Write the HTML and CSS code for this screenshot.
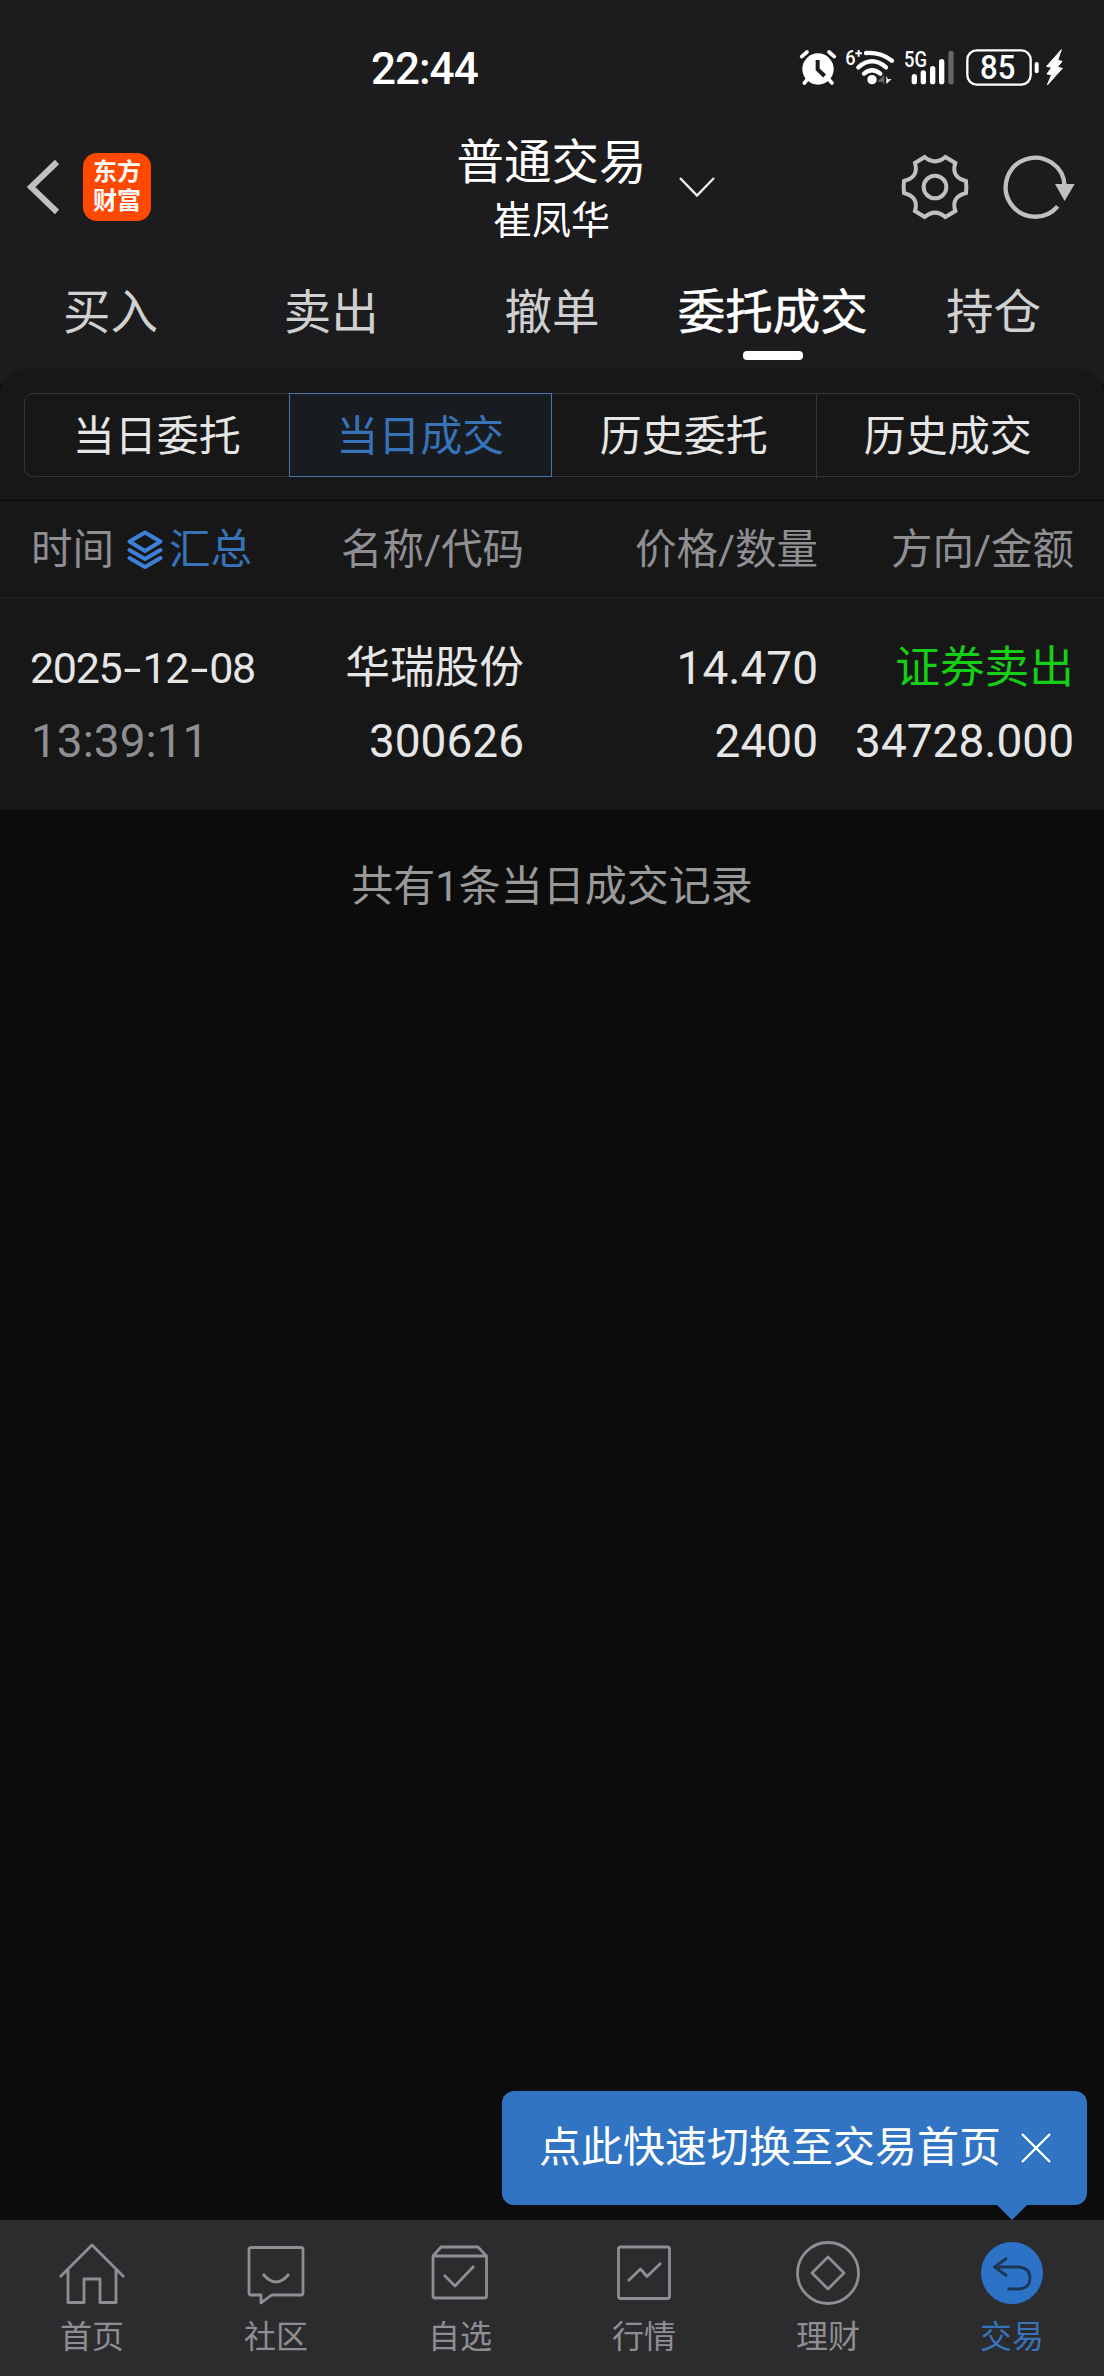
FILE: index.html
```html
<!DOCTYPE html>
<html lang="zh-CN">
<head>
    <meta charset="UTF-8">
    <meta name="viewport" content="width=device-width, initial-scale=1.0">
    <title>普通交易 - 当日成交</title>
    <link rel="stylesheet" href="styles.css">
</head>
<body>
    <header class="top">
        <div class="status-bar">
            <span class="clock">22:44</span>
            <svg class="status-icons" viewBox="0 0 870 180">
                <!-- alarm -->
                <circle cx="84" cy="87" r="47" fill="#fff"/>
                <path d="M35 50 L51 36 M133 50 L117 36 M52 118 L43 129 M116 118 L126 129" stroke="#fff" stroke-width="11" stroke-linecap="round"/>
                <path d="M83 60 V88 L104 108" fill="none" stroke="#1c1c1e" stroke-width="12"/>
                <!-- wifi -->
                <text x="166" y="75" font-size="60" textLength="31" lengthAdjust="spacingAndGlyphs">6</text>
                <path d="M196 40 H216 M206 30 V50" stroke="#fff" stroke-width="6"/>
                <path d="M228 39 Q272 36 306 62 M205 82 Q246 46 288 82 M222 101 Q246 81 271 101" fill="none" stroke="#fff" stroke-width="13" stroke-linecap="round"/>
                <circle cx="246" cy="119" r="14" fill="#fff"/>
                <path d="M281 106 V132 M265 124 L281 108 V124 Z" fill="#666" stroke="#666" stroke-width="3"/>
                <path d="M289 107 V132 L305 117 L294 118 Z" fill="#fff"/>
                <!-- signal -->
                <text x="342" y="82" font-size="66" textLength="69" lengthAdjust="spacingAndGlyphs">5G</text>
                <path d="M373 110 V125 M400 99 V125 M428 86 V125 M455 65 V125" stroke="#fff" stroke-width="16" stroke-linecap="round"/>
                <path d="M483 40 V125" stroke="#666" stroke-width="16" stroke-linecap="round"/>
                <!-- battery -->
                <rect x="532" y="31" width="190" height="103" rx="28" fill="none" stroke="#fff" stroke-width="7"/>
                <text x="570" y="116" font-size="98" textLength="106" lengthAdjust="spacingAndGlyphs">85</text>
                <path d="M740 72 V94" stroke="#fff" stroke-width="12" stroke-linecap="round"/>
                <path d="M814 29 L770 79 L785 82 L771 102 L785 104 L772 135 L817 85 L802 82 L816 64 L803 61 Z" fill="#fff" stroke="#fff" stroke-width="3" stroke-linejoin="round"/>
            </svg>
        </div>

        <div class="title-bar">
            <div class="title-left">
                <svg class="back" viewBox="0 0 34 58"><path d="M30 4 L4 29 L30 54" fill="none" stroke="#c0c0c0" stroke-width="6"/></svg>
                <div class="logo"><span>东方</span><span>财富</span></div>
            </div>
            <div class="account">
                <h1>普通交易</h1>
                <p>崔凤华</p>
            </div>
            <svg class="chevron" viewBox="0 0 38 22"><path d="M2 2 L19 19.5 L36 2" fill="none" stroke="#eee" stroke-width="2.4"/></svg>
            <div class="title-right">
                <svg class="gear" viewBox="781 42 204 198">
                    <path d="M852 51 Q883 77 914 51 L944 69 C934 99 948 116 976 123 Q978 141 976 159 C948 166 934 183 944 213 L914 231 Q883 205 852 231 L823 213 C832 183 818 166 790 159 Q788 141 790 123 C818 116 832 99 823 69 Z" fill="none" stroke="#c0c0c0" stroke-width="12"/>
                    <circle cx="883" cy="141" r="34" fill="none" stroke="#c0c0c0" stroke-width="12"/>
                </svg>
                <svg class="refresh" viewBox="1087 42 216 198">
                    <path d="M1251 199 A88.500 88.500 0 1 1 1272 137" fill="none" stroke="#c0c0c0" stroke-width="13"/>
                    <path d="M1243 132 H1302 L1272 183 Z" fill="#c0c0c0"/>
                </svg>
            </div>
        </div>

        <nav class="tabs">
            <a>买入</a>
            <a>卖出</a>
            <a>撤单</a>
            <a class="active">委托成交</a>
            <a>持仓</a>
        </nav>
    </header>

    <main class="content">
        <section class="panel">
            <div class="segments">
                <a>当日委托</a>
                <a class="active">当日成交</a>
                <a>历史委托</a>
                <a>历史成交</a>
            </div>
            <div class="row row-head">
                <div class="time-head">
                    <span>时间</span>
                    <svg class="layers" viewBox="0 0 36 40">
                        <path d="M18 2.500 L33.500 11.500 L18 21 L2.500 11.500 Z M2.500 20 L18 29 L33.500 20 M2.500 28 L18 37 L33.500 28" fill="none" stroke="#3c80d8" stroke-width="4" stroke-linejoin="round" stroke-linecap="round"/>
                    </svg>
                    <span class="summary">汇总</span>
                </div>
                <span>名称/代码</span>
                <span>价格/数量</span>
                <span>方向/金额</span>
            </div>
            <div class="row row-data">
                <span class="date">2025<i>-</i>12<i>-</i>08</span>
                <span class="name">华瑞股份</span>
                <span>14.470</span>
                <span class="name sell">证券卖出</span>
                <span class="time">13:39:11</span>
                <span>300626</span>
                <span>2400</span>
                <span>34728.000</span>
            </div>
        </section>
        <p class="total">共有1条当日成交记录</p>
    </main>

    <footer class="bottom-nav">
        <div class="tip">
            <span>点此快速切换至交易首页</span>
            <svg class="close" viewBox="0 0 32 32"><path d="M2 2 L30 30 M30 2 L2 30" stroke="#fff" stroke-width="2.400"/></svg>
        </div>
        <a>
            <svg viewBox="0 0 66 66"><path d="M1 36 L33 4 L65 36 M9 29 V61.500 H25 V38 H41 V61.500 H57 V29"/></svg>
            <span>首页</span>
        </a>
        <a>
            <svg viewBox="0 0 66 66"><path d="M8 6.500 H58 Q60 6.500 60 8.500 V52 Q60 54 58 54 H28.500 L18 62 V54 H8 Q6 54 6 52 V8.500 Q6 6.500 8 6.500 Z M20 33 Q33 49 46 33"/></svg>
            <span>社区</span>
        </a>
        <a>
            <svg viewBox="0 0 66 66"><path d="M6 15 L14 6 H51 L59.500 15 V55 Q59.500 57 57.500 57 H8 Q6 57 6 55 Z M6 15 H59.500 M17 34 L28 45 L47 25"/></svg>
            <span>自选</span>
        </a>
        <a>
            <svg viewBox="0 0 66 66"><rect x="7.500" y="6" width="51" height="51.500" rx="2"/><path d="M17 40 L29.500 28 L36 35.500 L50 22"/></svg>
            <span>行情</span>
        </a>
        <a>
            <svg viewBox="0 0 66 66"><circle cx="33" cy="32" r="30.500"/><path d="M33 16 L49 32 L33 48 L17 32 Z"/></svg>
            <span>理财</span>
        </a>
        <a class="active">
            <svg viewBox="0 0 66 66"><circle class="disc" cx="33" cy="32" r="31"/><path d="M28 17 L15.500 26 L28 35 M16 26 H40 Q51 27 51 37 Q51 47 40 48 H28.500"/></svg>
            <span>交易</span>
        </a>
    </footer>
</body>
</html>
```

FILE: styles.css
```css
* {
    box-sizing: border-box;
}
body {
    margin: 0;
    height: 2376px;
    display: flex;
    flex-direction: column;
    font-family: Roboto, "Noto Sans CJK SC", sans-serif;
    background-color: #0c0c0c;
    color: #e6e6e6;
}
h1, p {
    margin: 0;
    font-weight: 400;
}
svg {
    display: block;
}

/* header */
.top {
    height: 384px;
    background-color: #1c1c1e;
}
.status-bar {
    height: 128px;
    padding: 41px 24px 0 371px;
    display: flex;
    justify-content: space-between;
    color: #fff;
}
.clock {
    font-size: 44px;
    font-weight: 500;
    line-height: 56px;
    letter-spacing: -1px;
}
.status-icons {
    width: 290px;
    height: 60px;
    margin-top: -1px;
    font-weight: 500;
    fill: #fff;
}
.title-bar {
    height: 118px;
    padding: 0 29px 0 27px;
    display: grid;
    grid-template-columns: 432px 185px 1fr auto;
    grid-template-rows: 118px;
    align-items: center;
}
.title-left {
    display: flex;
    align-items: center;
    gap: 22px;
}
.back {
    width: 34px;
    height: 58px;
}
.logo {
    width: 68px;
    height: 68px;
    border-radius: 14px;
    background-color: #ff4800;
    color: #fff;
    font-size: 24px;
    font-weight: 700;
    line-height: 29px;
    display: flex;
    flex-direction: column;
    align-items: center;
    justify-content: center;
}
.account {
    align-self: start;
    padding-top: 5px;
    text-align: center;
    color: #fff;
    white-space: nowrap;
}
.account h1 {
    font-size: 47.5px;
    line-height: 60px;
    margin: 0 -4px;
}
.account p {
    font-size: 39px;
    line-height: 56px;
}
.chevron {
    width: 38px;
    height: 22px;
    margin-left: 34px;
}
.title-right {
    display: flex;
    gap: 34px;
}
.gear {
    width: 68px;
    height: 66px;
}
.refresh {
    width: 72px;
    height: 66px;
}
.tabs {
    height: 123px;
    display: grid;
    grid-template-columns: repeat(5, 1fr);
    padding-top: 32px;
}
.tabs a {
    display: flex;
    flex-direction: column;
    align-items: center;
    font-size: 47.5px;
    line-height: 71px;
    color: #d0d0d0;
}
.tabs .active {
    color: #fff;
    -webkit-text-stroke: 0.5px #fff;
}
.tabs .active::after {
    content: "";
    width: 60px;
    height: 9px;
    margin-top: 2px;
    border-radius: 4px;
    background-color: #fff;
}

/* orders */
.content {
    flex: 1;
}
.panel {
    position: relative;
    height: 441px;
    margin-top: -15px;
    padding-top: 24px;
    border-radius: 26px 26px 0 0;
    background-color: #171717;
}
.segments {
    height: 84px;
    margin: 0 24px;
    display: grid;
    grid-template-columns: repeat(4, 1fr);
    border: 1px solid #363636;
    border-radius: 9px;
}
.segments a {
    font-size: 42px;
    line-height: 85px;
    text-align: center;
}
.segments a + a {
    border-left: 1px solid #363636;
}
.segments .active {
    height: 84px;
    margin: -1px 0;
    border: 1px solid #4677ac;
    background-color: #181b20;
    color: #3773b8;
}
.segments .active + a {
    border-left: none;
}
.segments a.active {
    border-left-color: #4677ac;
}
.row {
    display: grid;
    grid-template-columns: 260px 233px 294px 256px;
    padding-left: 31px;
    text-align: right;
    white-space: nowrap;
}
.row-head {
    height: 98px;
    margin-top: 23px;
    border-top: 1px solid #0c0c0c;
    border-bottom: 1px solid #242424;
    font-size: 41.5px;
    line-height: 98px;
    color: #8e8e93;
}
.time-head {
    display: flex;
    align-items: center;
}
.layers {
    width: 36px;
    height: 40px;
    margin: 0 6px 0 13px;
}
.summary {
    color: #3773b8;
}
.row-data {
    padding-top: 34px;
    font-size: 46px;
    line-height: 73px;
}
.row-data .name {
    font-size: 44.7px;
}
.date, .time {
    text-align: left;
}
.row-data .date {
    margin-left: -1px;
    font-size: 43px;
    letter-spacing: -1.3px;
}
.date i {
    display: inline-block;
    width: 21px;
    font-style: normal;
    text-align: center;
    transform: scaleX(1.5);
}
.time {
    color: #8e8e93;
}
.row-data .sell {
    color: #14cf14;
}
.total {
    margin-top: 40px;
    font-size: 42px;
    line-height: 74px;
    text-align: center;
    color: #999;
}

/* bottom nav */
.bottom-nav {
    position: relative;
    height: 156px;
    display: grid;
    grid-template-columns: repeat(6, 1fr);
    background-color: #2c2c2e;
}
.bottom-nav a {
    display: flex;
    flex-direction: column;
    align-items: center;
    padding-top: 21px;
    font-size: 32px;
    line-height: 60px;
    color: #8e8e93;
}
.bottom-nav a svg {
    width: 66px;
    height: 66px;
    fill: none;
    stroke: #8e8e93;
    stroke-width: 2.8;
    stroke-linejoin: round;
}
.bottom-nav .active {
    color: #3773b8;
}
.bottom-nav .active svg {
    stroke: #1c3656;
}
.bottom-nav .disc {
    fill: #2c72c7;
    stroke: none;
}
.tip {
    position: absolute;
    right: 17px;
    bottom: 171px;
    width: 585px;
    height: 114px;
    padding: 0 35px 0 37px;
    display: flex;
    align-items: center;
    justify-content: space-between;
    border-radius: 12px;
    background-color: #3074c3;
    color: #fff;
    font-size: 42px;
    line-height: 74px;
    white-space: nowrap;
}
.tip::after {
    content: "";
    position: absolute;
    right: 60px;
    top: 114px;
    border: 15px solid transparent;
    border-top-color: #3074c3;
    border-bottom: none;
}
.close {
    width: 32px;
    height: 32px;
}
```
